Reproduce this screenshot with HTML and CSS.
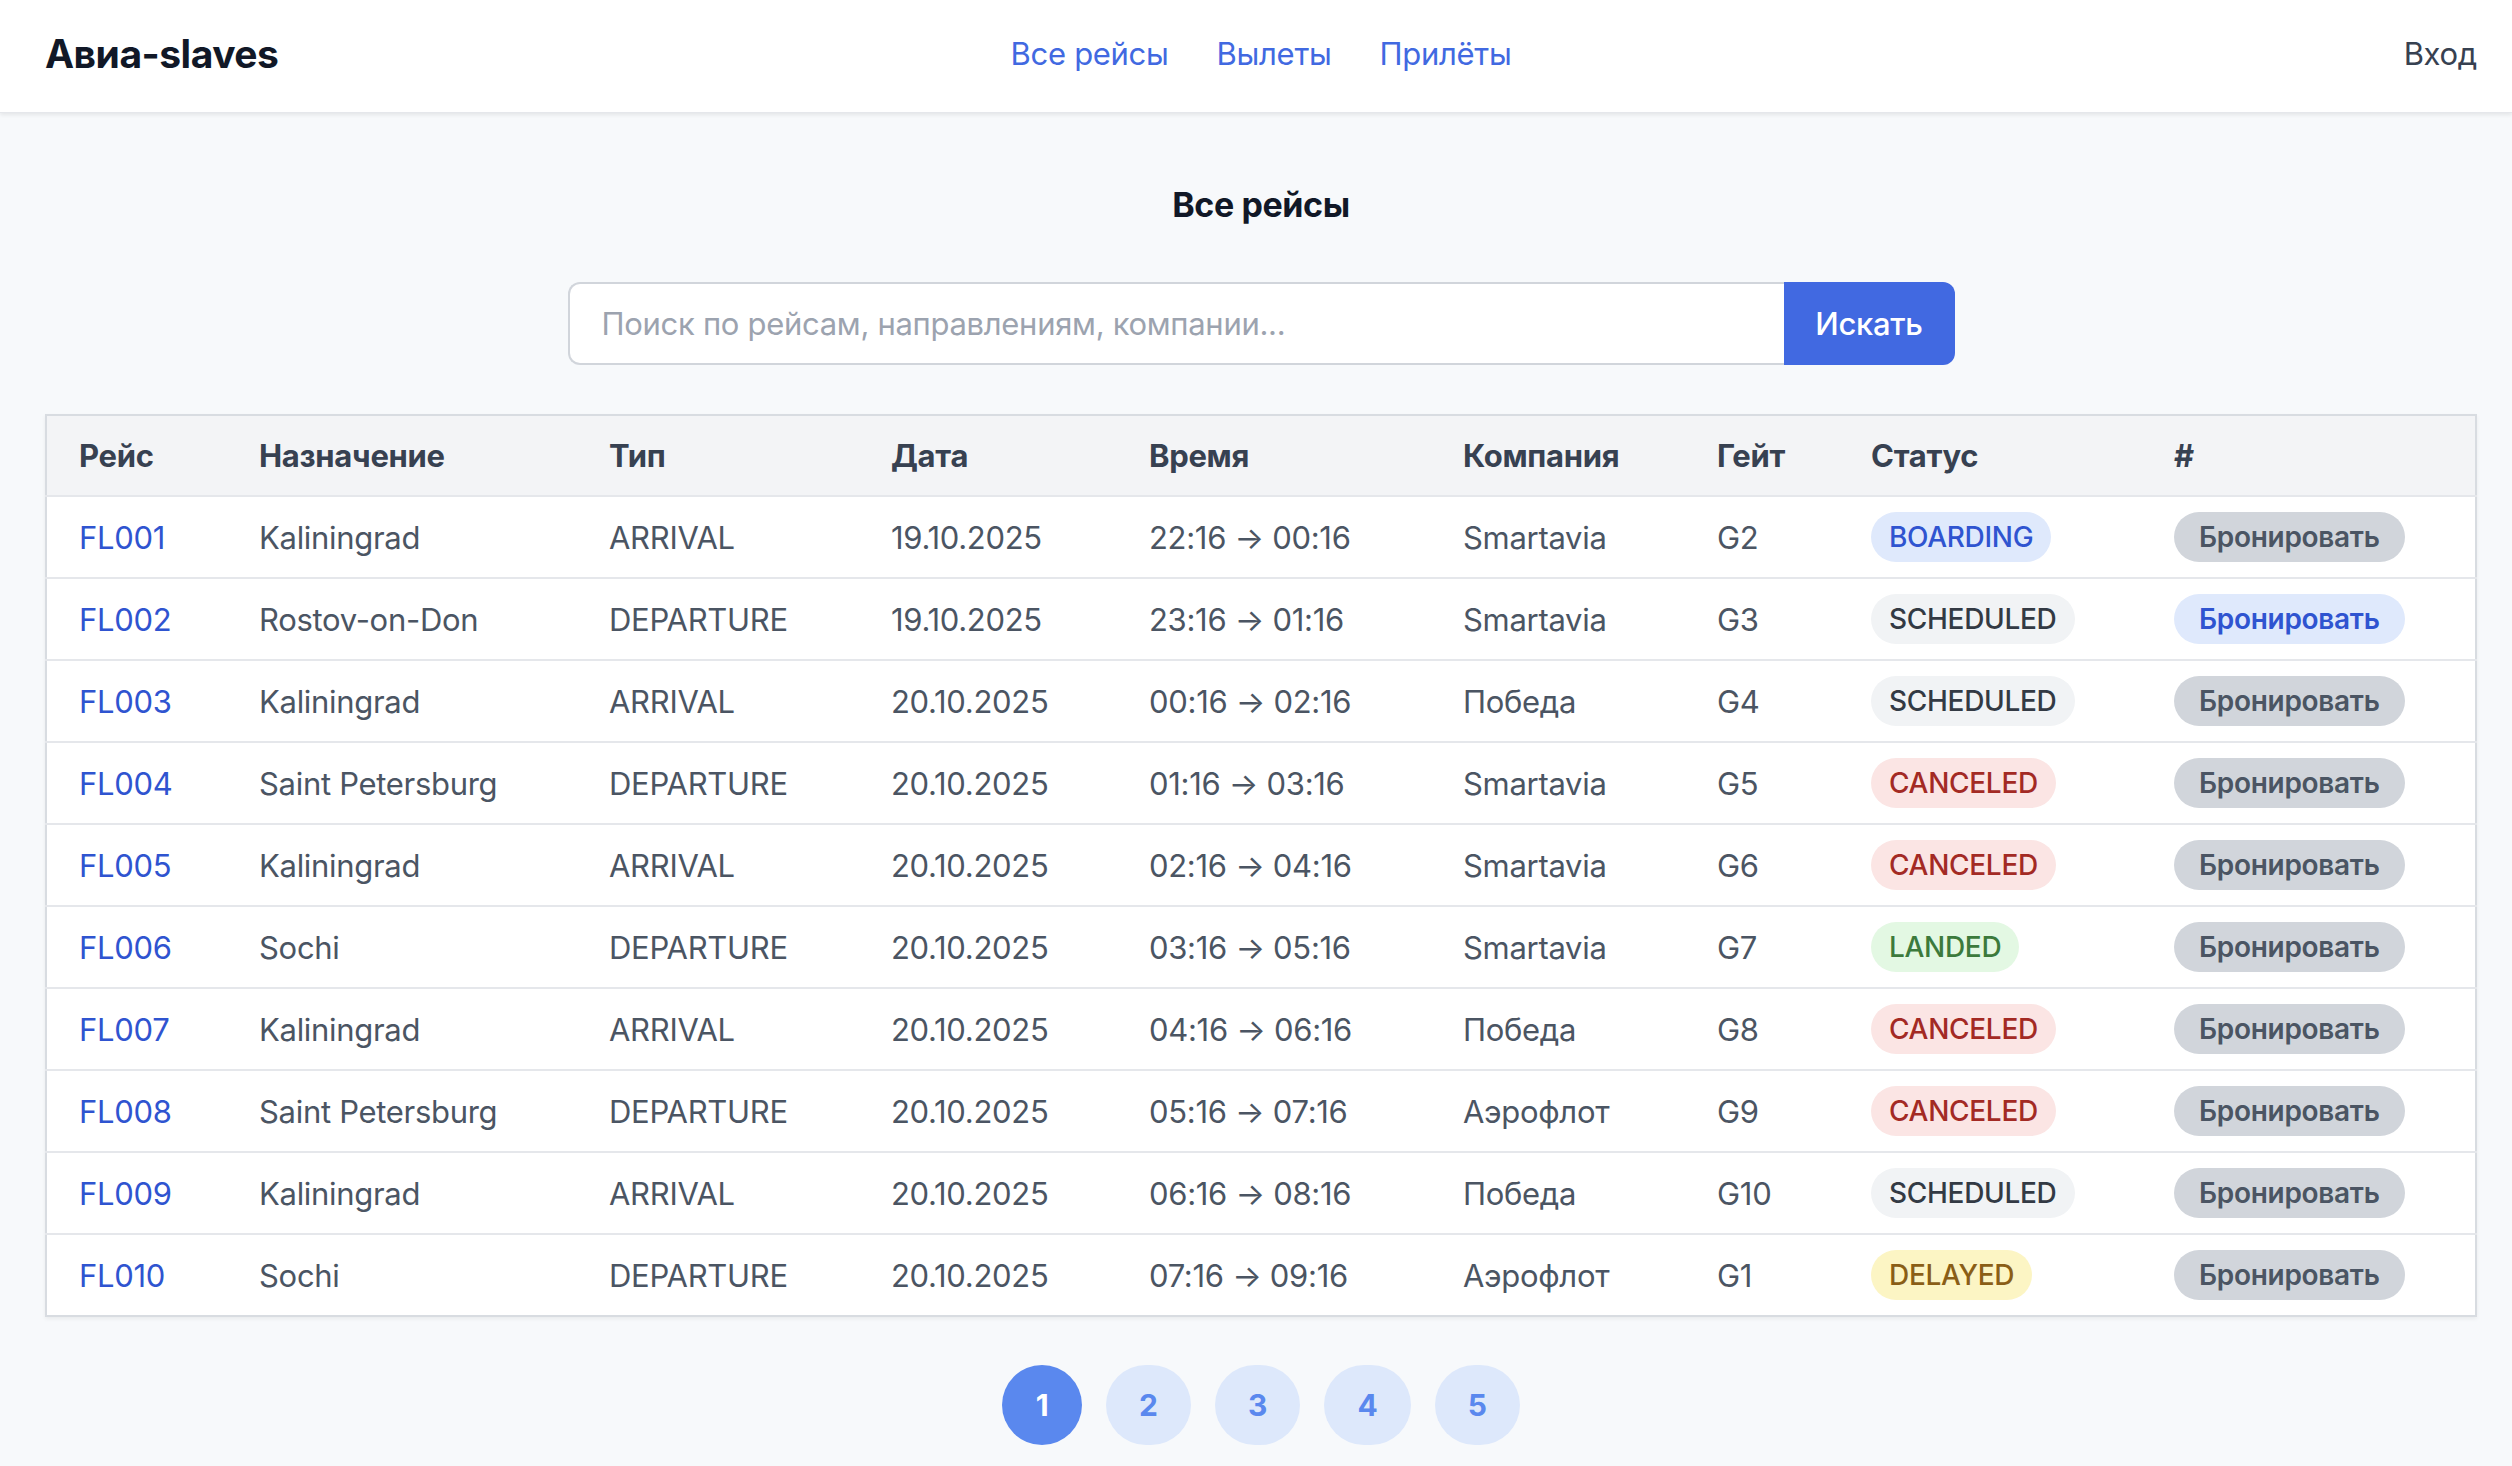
FILE: index.html
```html
<!DOCTYPE html>
<html lang="ru">
<head>
<meta charset="utf-8">
<title>Авиа-slaves</title>
<link rel="stylesheet" href="styles.css">
</head>
<body>
<header class="topbar">
  <div class="logo">Авиа-slaves</div>
  <nav class="nav">
    <a class="nav-link" href="#">Все рейсы</a>
    <a class="nav-link" href="#">Вылеты</a>
    <a class="nav-link" href="#">Прилёты</a>
  </nav>
  <a class="login" href="#">Вход</a>
</header>
<main class="main">
  <h1 class="title">Все рейсы</h1>
  <form class="search">
    <input class="search-input" type="text" placeholder="Поиск по рейсам, направлениям, компании...">
    <button class="search-btn" type="button">Искать</button>
  </form>
  <table class="flights">
    <colgroup>
      <col class="c1"><col class="c2"><col class="c3"><col class="c4"><col class="c5"><col class="c6"><col class="c7"><col class="c8"><col class="c9">
    </colgroup>
    <thead>
      <tr><th>Рейс</th><th>Назначение</th><th>Тип</th><th>Дата</th><th>Время</th><th>Компания</th><th>Гейт</th><th>Статус</th><th>#</th></tr>
    </thead>
    <tbody>
      <tr><td><a class="fid" href="#">FL001</a></td><td>Kaliningrad</td><td>ARRIVAL</td><td>19.10.2025</td><td>22:16 → 00:16</td><td>Smartavia</td><td>G2</td><td><span class="badge boarding">BOARDING</span></td><td><button class="book">Бронировать</button></td></tr>
      <tr><td><a class="fid" href="#">FL002</a></td><td>Rostov-on-Don</td><td>DEPARTURE</td><td>19.10.2025</td><td>23:16 → 01:16</td><td>Smartavia</td><td>G3</td><td><span class="badge scheduled">SCHEDULED</span></td><td><button class="book active">Бронировать</button></td></tr>
      <tr><td><a class="fid" href="#">FL003</a></td><td>Kaliningrad</td><td>ARRIVAL</td><td>20.10.2025</td><td>00:16 → 02:16</td><td>Победа</td><td>G4</td><td><span class="badge scheduled">SCHEDULED</span></td><td><button class="book">Бронировать</button></td></tr>
      <tr><td><a class="fid" href="#">FL004</a></td><td>Saint Petersburg</td><td>DEPARTURE</td><td>20.10.2025</td><td>01:16 → 03:16</td><td>Smartavia</td><td>G5</td><td><span class="badge canceled">CANCELED</span></td><td><button class="book">Бронировать</button></td></tr>
      <tr><td><a class="fid" href="#">FL005</a></td><td>Kaliningrad</td><td>ARRIVAL</td><td>20.10.2025</td><td>02:16 → 04:16</td><td>Smartavia</td><td>G6</td><td><span class="badge canceled">CANCELED</span></td><td><button class="book">Бронировать</button></td></tr>
      <tr><td><a class="fid" href="#">FL006</a></td><td>Sochi</td><td>DEPARTURE</td><td>20.10.2025</td><td>03:16 → 05:16</td><td>Smartavia</td><td>G7</td><td><span class="badge landed">LANDED</span></td><td><button class="book">Бронировать</button></td></tr>
      <tr><td><a class="fid" href="#">FL007</a></td><td>Kaliningrad</td><td>ARRIVAL</td><td>20.10.2025</td><td>04:16 → 06:16</td><td>Победа</td><td>G8</td><td><span class="badge canceled">CANCELED</span></td><td><button class="book">Бронировать</button></td></tr>
      <tr><td><a class="fid" href="#">FL008</a></td><td>Saint Petersburg</td><td>DEPARTURE</td><td>20.10.2025</td><td>05:16 → 07:16</td><td>Аэрофлот</td><td>G9</td><td><span class="badge canceled">CANCELED</span></td><td><button class="book">Бронировать</button></td></tr>
      <tr><td><a class="fid" href="#">FL009</a></td><td>Kaliningrad</td><td>ARRIVAL</td><td>20.10.2025</td><td>06:16 → 08:16</td><td>Победа</td><td>G10</td><td><span class="badge scheduled">SCHEDULED</span></td><td><button class="book">Бронировать</button></td></tr>
      <tr><td><a class="fid" href="#">FL010</a></td><td>Sochi</td><td>DEPARTURE</td><td>20.10.2025</td><td>07:16 → 09:16</td><td>Аэрофлот</td><td>G1</td><td><span class="badge delayed">DELAYED</span></td><td><button class="book">Бронировать</button></td></tr>
    </tbody>
  </table>
  <div class="pager">
    <button class="page current">1</button>
    <button class="page">2</button>
    <button class="page">3</button>
    <button class="page">4</button>
    <button class="page">5</button>
  </div>
</main>
</body>
</html>
```
FILE: styles.css
```css
* { box-sizing: border-box; }
html, body { margin: 0; padding: 0; }
body {
  background: #f7f9fb;
  font-family: Inter, "Noto Sans", sans-serif;
  color: #4b5563;
  font-size: 32px;
}
.topbar {
  height: 113px;
  background: #ffffff;
  display: grid;
  grid-template-columns: 1fr auto 1fr;
  align-items: center;
  padding: 0 35px 6px 45px;
  box-shadow: 0 2px 4px rgba(0,0,0,0.08);
  border-bottom: 1px solid #e5e7eb;
}
.logo {
  font-weight: 700;
  font-size: 39px;
  color: #111827;
  letter-spacing: -0.5px;
}
.nav { display: flex; gap: 48px; }
.nav-link {
  color: #4169e1;
  text-decoration: none;
  font-size: 31px;
  letter-spacing: -0.3px;
}
.login {
  justify-self: end;
  color: #374151;
  text-decoration: none;
  font-size: 31px;
  letter-spacing: -0.3px;
}
.main {
  padding: 0 35px 0 45px;
  display: flex;
  flex-direction: column;
  align-items: center;
}
.title {
  margin: 70px 0 0;
  height: 44px;
  line-height: 44px;
  font-size: 34px;
  font-weight: 700;
  color: #111827;
  letter-spacing: -0.4px;
}
.search {
  margin-top: 55px;
  display: flex;
  width: 1387px;
  height: 83px;
}
.search-input {
  flex: 1;
  border: 2px solid #d1d5db;
  border-right: none;
  border-radius: 12px 0 0 12px;
  padding: 0 32px;
  font-family: inherit;
  font-size: 31px;
  color: #374151;
  background: #fff;
  outline: none;
  letter-spacing: -0.3px;
}
.search-input::placeholder { color: #9ca3af; }
.search-btn {
  width: 171px;
  border: none;
  border-radius: 0 12px 12px 0;
  background: #4169e1;
  color: #fff;
  font-family: inherit;
  font-size: 31px;
  font-weight: 500;
  letter-spacing: -0.3px;
}
.flights {
  margin-top: 49px;
  width: 100%;
  border-collapse: collapse;
  table-layout: fixed;
  background: #fff;
  border: 2px solid #d8dce1;
  box-shadow: 0 2px 4px rgba(0,0,0,0.06);
}
.c1 { width: 181px; }
.c2 { width: 350px; }
.c3 { width: 282px; }
.c4 { width: 258px; }
.c5 { width: 314px; }
.c6 { width: 254px; }
.c7 { width: 154px; }
.c8 { width: 303px; }
.c9 { width: auto; }
.flights th {
  background: #f3f4f6;
  height: 81px;
  text-align: left;
  padding: 0 0 0 32px;
  font-weight: 700;
  color: #374151;
  font-size: 31px;
  letter-spacing: -0.3px;
  border-bottom: 2px solid #e5e7eb;
}
.flights td {
  height: 82px;
  padding: 0 0 0 32px;
  border-top: 2px solid #e5e7eb;
  color: #4b5563;
  font-size: 31px;
  letter-spacing: -0.3px;
  white-space: nowrap;
}
.flights tbody tr:first-child td { border-top: none; }
.fid { color: #2f54d0; text-decoration: none; }
.badge {
  display: inline-block;
  height: 50px;
  line-height: 50px;
  padding: 0 18px;
  border-radius: 25px;
  font-size: 28px;
  font-weight: 500;
  letter-spacing: -0.3px;
}
.boarding { background: #dfe9fc; color: #2f54d0; }
.scheduled { background: #f1f3f5; color: #333a44; }
.canceled { background: #fbe5e4; color: #a32a24; }
.landed { background: #e3f8e3; color: #3c7a3c; }
.delayed { background: #fcf5c4; color: #8a5e16; }
.book {
  height: 50px;
  padding: 0 25px;
  border: none;
  border-radius: 25px;
  background: #d1d5db;
  color: #4b5563;
  font-family: inherit;
  font-size: 28px;
  font-weight: 600;
  letter-spacing: -0.3px;
}
.book.active { background: #dfe9fc; color: #2f54d0; }
.pager {
  margin-top: 48px;
  display: flex;
  gap: 24px;
}
.page {
  height: 80px;
  min-width: 80px;
  padding: 0 33px;
  border: none;
  border-radius: 40px;
  background: #dde8fb;
  color: #5a88ee;
  font-family: inherit;
  font-size: 30px;
  font-weight: 700;
}
.page.current { background: #5a88ee; color: #fff; }
```
